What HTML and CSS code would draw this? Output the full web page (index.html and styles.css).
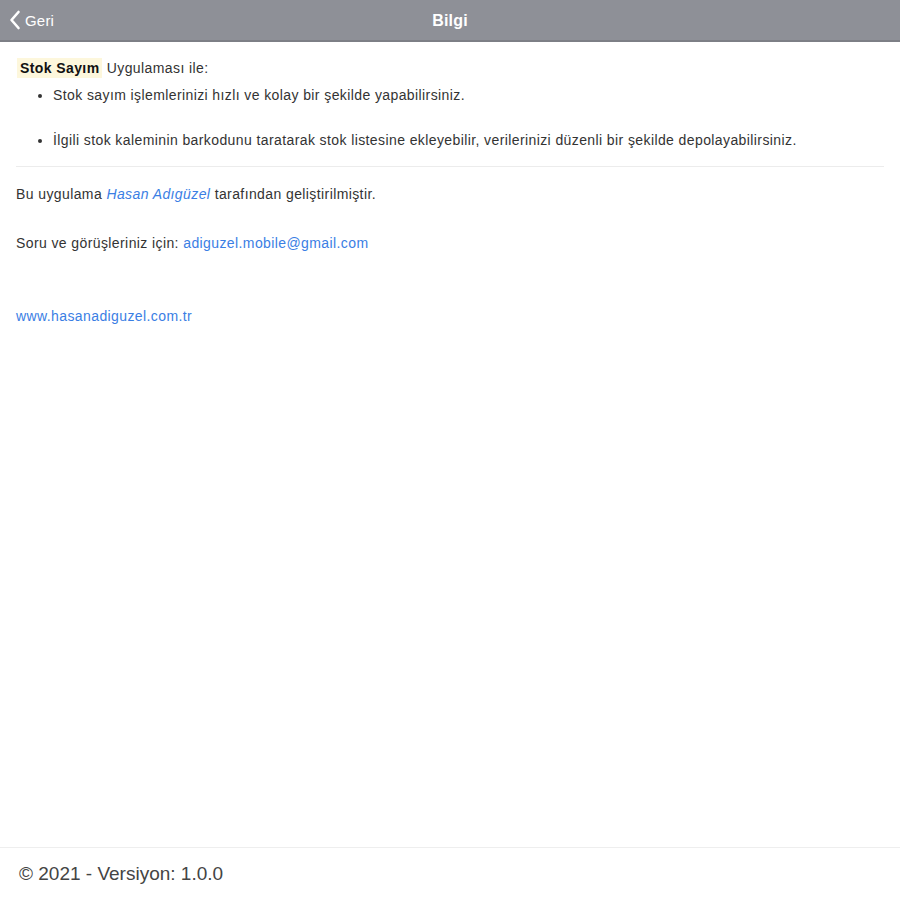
FILE: index.html
```html
<!DOCTYPE html>
<html>
<head>
    <title>Bilgi</title>
    <meta name="viewport" content="width=device-width, initial-scale=1">
    <link rel="stylesheet" href="styles.css">
</head>
<body>
    <div class="page">
        <div class="navbar">
            <a class="back" href="#">
                <svg width="12" height="20" viewBox="0 0 12 20"><path d="M9.5 2 L2.5 10 L9.5 18" fill="none" stroke="#fff" stroke-width="2.6" stroke-linecap="round" stroke-linejoin="round"/></svg>
                <span>Geri</span>
            </a>
            <div class="title">Bilgi</div>
        </div>

        <div class="content">
            <p class="intro"><span class="mark">Stok Sayım</span> Uygulaması ile:</p>
            <ul>
                <li>Stok sayım işlemlerinizi hızlı ve kolay bir şekilde yapabilirsiniz.</li>
                <li>İlgili stok kaleminin barkodunu taratarak stok listesine ekleyebilir, verilerinizi düzenli bir şekilde depolayabilirsiniz.</li>
            </ul>
            <hr>
            <p class="dev">Bu uygulama <a href="#"><i>Hasan Adıgüzel</i></a> tarafından geliştirilmiştir.</p>
            <p class="mail">Soru ve görüşleriniz için: <a href="#">adiguzel.mobile@gmail.com</a></p>
            <p class="site"><a href="#">www.hasanadiguzel.com.tr</a></p>
        </div>

        <div class="footer">© 2021 - Versiyon: 1.0.0</div>
    </div>
</body>
</html>
```

FILE: styles.css
```css
body {
    margin: 0;
    font-family: "Liberation Sans", Arial, sans-serif;
    background-color: #fff;
    color: #333;
}
.page {
    height: 900px;
    display: flex;
    flex-direction: column;
}
.navbar {
    height: 40px;
    background-color: #8e9097;
    border-bottom: 2px solid #7d7f86;
    display: flex;
    align-items: center;
    justify-content: center;
    position: relative;
}
.back {
    position: absolute;
    left: 9px;
    top: 10px;
    display: flex;
    align-items: center;
    gap: 4px;
    color: #fff;
    text-decoration: none;
    font-size: 15px;
    letter-spacing: 0.2px;
}
.title {
    color: #fff;
    font-weight: bold;
    font-size: 16px;
    letter-spacing: 0.2px;
    padding-top: 2px;
}
.content {
    flex: 1;
    padding: 16px 16px 0 16px;
    font-size: 14px;
    letter-spacing: 0.4px;
}
p {
    margin: 0;
}
.intro {
    line-height: 20px;
}
.mark {
    background-color: #fdf7dc;
    font-weight: bold;
    color: #111;
    padding: 2px 3px;
    margin-left: 1px;
}
ul {
    margin: 8px 0 0 0;
    padding-left: 37px;
}
li {
    line-height: 19px;
    margin-bottom: 26px;
}
li:last-child {
    margin-bottom: 0;
}
hr {
    border: none;
    border-top: 1px solid #ececec;
    margin: 16px 0 0 0;
}
a {
    color: #3a7ee4;
    text-decoration: none;
}
.dev {
    margin-top: 18px;
    line-height: 19px;
}
.mail {
    margin-top: 30px;
    line-height: 19px;
}
.site {
    margin-top: 54px;
    line-height: 19px;
}
.footer {
    border-top: 1px solid #eeeeee;
    height: 52px;
    padding-left: 19px;
    display: flex;
    align-items: center;
    font-size: 19px;
    color: #444;
}
```
